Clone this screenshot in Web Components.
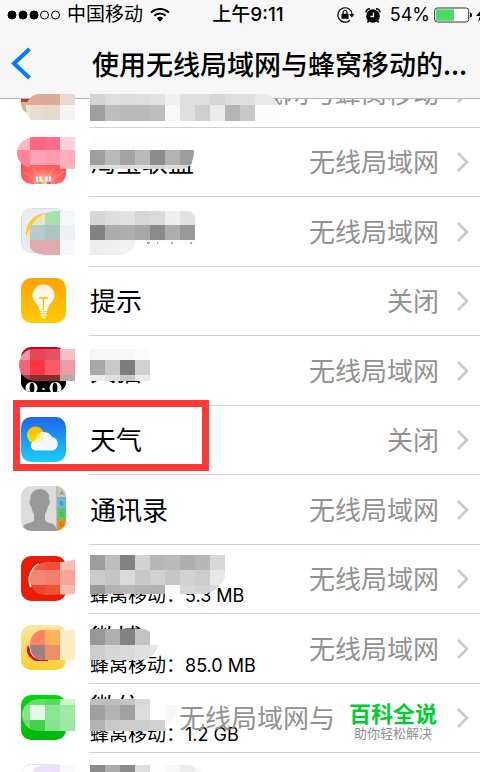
<!DOCTYPE html>
<html lang="zh-CN">
<head>
<meta charset="utf-8">
<meta name="viewport" content="width=device-width, initial-scale=1">
<title>使用无线局域网与蜂窝移动的应用</title>
<style>
html, body { margin: 0; height: 100%; }
body { background: #fff; color: #000; font-family: Inter, "Noto Sans CJK SC", sans-serif; overflow: hidden; }
</style>
</head>
<body>
<settings-page></settings-page>
<script>
const cells = (clip, bands) => {
  const id = 'c' + (cells.n = (cells.n || 0) + 1);
  const rects = bands.map(([y, h, x, list]) => list.split(' ').map((c, i) =>
    c === '-' ? '' : `<rect x="${x + i * 15}" y="${y}" width="15" height="${h}" fill="#${c}"/>`).join('')).join('');
  return `<clipPath id="${id}"><path d="${clip}"/></clipPath><g clip-path="url(#${id})">${rects}</g>`;
};

/* App icons, 45 x 45 */
const ICONS = {
  brown: `<rect width="45" height="45" rx="10" fill="#d2b78c"/><path d="M0 0h45v33H0z" fill="#c23b22"/>`,
  sale: `<defs><radialGradient id="g" cx=".5" cy=".95" r=".8"><stop offset="0" stop-color="#ffc2a8"/><stop offset=".35" stop-color="#ff6a62"/><stop offset="1" stop-color="#ff3740"/></radialGradient></defs>
    <rect width="45" height="45" rx="10" fill="url(#g)"/><path d="M22 45 3 33M22 45 12 29M22 45 33 29M22 45 43 33" stroke="#ff9c90" stroke-opacity=".5" stroke-width="2"/>
    <path d="M16 37.500v5M19.500 37.500v5M25.500 37.500v5M29 37.500v5" stroke="#fff" stroke-width="2"/><path d="M22 41v1.500" stroke="#fff" stroke-width="1.500"/><path d="M17 44h4" stroke="#6ccf76" stroke-width="2"/><path d="M21 44h5" stroke="#ffd83c" stroke-width="2"/><path d="M26 44h4" stroke="#d44fc1" stroke-width="2"/>`,
  swirl: `<rect x=".5" y=".5" width="44" height="44" rx="10" fill="#e8edf6" stroke="#d6dce5"/><circle cx="23" cy="24" r="18" fill="#fff"/><path d="M5 28C4 15 13 5 26 5C14 9 13 18 6 28Z" fill="#fdc72a"/>`,
  tips: `<defs><linearGradient id="g" x2="0" y2="1"><stop stop-color="#ffa303"/><stop offset="1" stop-color="#ffcb03"/></linearGradient><linearGradient id="b" x2="0" y2="1"><stop stop-color="#fff3dc"/><stop offset="1" stop-color="#fff"/></linearGradient></defs>
    <rect width="45" height="45" rx="10" fill="url(#g)"/><path d="M22.500 6.500a11 11 0 0 0-11 11c0 5 4 7 6 11.500l1.500 4h7l1.500-4c2-4.500 6-6.500 6-11.500a11 11 0 0 0-11-11Z" fill="url(#b)"/>
    <path d="M18 20h9M22.500 20v12" stroke="#ffb303" stroke-width="1.300" fill="none"/><path d="M19 34.500h7M19.500 37h6M20.500 39.500h4" stroke="#fff" stroke-width="1.500"/>`,
  cat: `<defs><clipPath id="k"><rect width="45" height="45" rx="10"/></clipPath></defs><g clip-path="url(#k)"><path fill="#c8001c" d="M0 0h45v45H0z"/><path fill="#000" d="M0 28h45v17H0z"/><ellipse cx="10.500" cy="41" rx="6" ry="6" fill="#fff"/><ellipse cx="34.500" cy="41" rx="6" ry="6" fill="#fff"/><ellipse cx="11" cy="41" rx="2.500" ry="5.500"/><ellipse cx="34" cy="41" rx="2.500" ry="5.500"/><ellipse cx="22.500" cy="42" rx="1.500" ry="1" fill="#ddd"/></g>`,
  weather: `<defs><linearGradient id="g" x2="0" y2="1"><stop stop-color="#1f66ee"/><stop offset="1" stop-color="#1acffd"/></linearGradient><linearGradient id="s" x2="0" y2="1"><stop stop-color="#ffba00"/><stop offset="1" stop-color="#ffe000"/></linearGradient></defs>
    <rect width="45" height="45" rx="10" fill="url(#g)"/><circle cx="14.500" cy="18" r="8.500" fill="url(#s)"/>
    <path d="M15 33.500a5 5 0 0 1-.5-10 8.800 8.800 0 0 1 16.500-3.500 7 7 0 0 1 1 13.500Z" fill="#f2f8ff"/><path d="M14.500 23.500A8.800 8.800 0 0 1 22.500 15 8.500 8.500 0 0 1 15 26.500 5 5 0 0 0 10.500 25.500Z" fill="#fff0a8"/>`,
  contacts: `<defs><clipPath id="k"><rect width="45" height="45" rx="10"/></clipPath></defs><g clip-path="url(#k)"><path fill="#dcdcdc" d="M0 0h45v45H0z"/>
    <path d="M0 45c1-5 4-7 8-8 3-1 5-1 5-4v-5c-2-3-2-5-3-8-2-1-2-6-.5-6C8.500 8 13 3 19 3s10.500 5 9 11c1.500 0 1 5-1 6-.5 3-1 5-3 8v5c0 3 2 3 5 4 4 1 6 3 7 8Z" fill="#999"/>
    <path fill="#c7c4bc" d="M36.500 0H45v11.500h-8.500z"/><path fill="#56bdf0" d="M36.500 12H45v10.500h-8.500z"/><path fill="#4cd25b" d="M36.500 23H45v10h-8.500z"/><path fill="#f78b05" d="M36.500 34H45v11h-8.500z"/><path d="M36 0v45M36 11.700h9M36 22.700h9M36 33.500h9" stroke="#8c8276" stroke-width=".7"/>
    <g fill="none" stroke="#555" stroke-opacity=".6" stroke-width=".7"><path d="m39 8.500 1.800-3.500 1.800 3.500M39.500 7.500h2.500M39.500 15.500v3.500h1.500a1 1 0 0 0 0-2 1 1 0 0 0 0-1.500zM39.500 17h1.500M42.500 27a1.800 1.800 0 1 0 0 2M39.500 36.500v3.500c4 0 4-3.500 0-3.500"/></g></g>`,
  red: `<rect width="45" height="45" rx="10" fill="#eb1c02"/><path d="M10 31C7 24 8 14 18 8" stroke="#fff" stroke-width="2" fill="none"/><path d="M23 8c2-3 7-3 9 0Z" fill="#fff"/>`,
  weibo: `<defs><linearGradient id="g" x2="0" y2="1"><stop stop-color="#fbe6a3"/><stop offset="1" stop-color="#ffce2e"/></linearGradient></defs><rect width="45" height="45" rx="10" fill="url(#g)"/><path d="M7 20c-3 6 0 13 8 16h12v-4H13Z" fill="#dc0b17"/><path d="M9 23c-1 5 3 10 10 12h10V20Z" fill="#fff"/>`,
  wechat: `<defs><linearGradient id="g" x2="0" y2="1"><stop stop-color="#00d80b"/><stop offset="1" stop-color="#00b70b"/></linearGradient></defs><rect width="45" height="45" rx="10" fill="url(#g)"/>`,
  pale: `<rect x=".5" y=".5" width="44" height="44" rx="10" fill="#fff" stroke="#e2e2e6"/>`
};

/* Pixelated patches over the private names, on a 15px grid */
const PATCHES = {
  brown: cells('M75 94H38C32 95 29 99 26 104C25 109 28 117 31 120H75Z', [[94,11,15,'dea996 dea996 dea996 ebd8d3'],[105,15,15,'eee6dc e9dccf e5d9c9 f7f3f0']])
    + cells('M90 94H264C271 94 275 99 279 105V121H90Z', [[94,11,90,'d4d4d4 dedede dcdcdc dedede e2e2e2 f0f0f0 dfdfdf dedede d6d6d6 dedede dedede e8e8e8 e8e8e8'],[105,16,90,'9f9f9f bdbdbd b9b9b9 b9b9b9 bdbdbd f8f8f8 dfdfdf cfcfcf ebebeb b4b4b4 c8c8c8 fcfcfc fcfcfc']]),
  sale: cells('M75 137H34C24 137 17 145 17 153S24 168 32 168L75 169Z', [[137,13,15,'feb5c5 ff6480 ff6b88 ffd0dc'],[150,15,15,'ff8298 ffa3b5 ff9cb0 ffadbb'],[165,4,15,'ff8298 ff6262 ff5a5a ffb5b5']])
    + cells('M90 137H186Q194 138 194 150C194 160 190 169 182 169H90Z', [[137,13,90,'fdfdfd fefefe fdfdfd fefefe fefefe fefefe fefefe'],[150,15,90,'9f9f9f b9b9b9 a3a3a3 b9b9b9 8c8c8c b2b2b2 9e9e9e'],[165,4,90,'dddddd dfdfdf dddddd e0e0e0 d5d5d5 dedede dcdcdc']]),
  swirl: cells('M75 211H56C42 212 33 219 26 236V240C28 249 36 255 47 255H75Z', [[211,14,15,'efe6c8 eae3ca a9dfab f3f6fb'],[225,15,15,'efe6c8 b9cbc8 adc5c0 edf1f3'],[240,15,15,'f1e4e8 dfaab0 e0acb2 f5f7fb']])
    + cells('M90 211H188Q195 212 195 217V243H135C134 250 126 255 119 255H90Z', [[211,14,90,'d6d6d6 dddddd e2e2e2 d7d7d7 dadada eeeeee e2e2e2'],[225,15,90,'828282 ababab aeaeae a7a7a7 8a8a8a adadad 989898'],[240,15,90,'ededed efefef f1f1f1 fbfbfb fafafa fbfbfb fafafa']])
    + '<path d="M147 243h3M157 243h1M171 243h2M190 243h2" stroke="#555"/>',
  cat: cells('M75 349H34C25 349 19 356 19 365S26 381 35 381H75Z', [[349,11,15,'e99aa8 e84855 e65263 f4c0c8'],[360,15,15,'e9667c ff3440 ff5a68 f09aa3'],[375,6,15,'a83f48 83302f 83302f b0acad']])
    + cells('M90 349H150V381H90Z', [[349,11,90,'f7f7f7 f7f7f7 f6f6f6 fafafa'],[360,15,90,'a8a8a8 c9c9c9 7d7d7d d0d0d0'],[375,6,90,'ebebeb dedede c9c9c9 eaeaea']]),
  red: cells('M75 559Q71 562 60 562H46C35 564 30 571 30 580C31 590 37 595 46 595L75 594Z', [[555,15,30,'f4563f ee5038 f7bdb3'],[570,15,30,'f4866f f47e6c f7a598'],[585,10,30,'ee4630 ef5036 f8bab2']])
    + cells('M90 555H225V577C221 587 212 594 201 594H90Z', [[555,15,90,'9d9d9d bdbdbd 828282 d2d2d2 b7b7b7 bababa aeaeae b7b7b7 d8d8d8'],[570,15,90,'cbcbcb c5c5c5 dadada c7c7c7 d1d1d1 c6c6c6 d2d2d2 cdcdcd e8e8e8'],[585,9,90,'9a9a9a b4b4b4 b8b8b8 b4b4b4 b3b3b3 f8f8f8 d7d7d7 d3d3d3 d9d9d9']]),
  weibo: cells('M75 630H42C34 631 30 637 30 645C30 654 35 660 43 660H75Z', [[630,15,30,'fc845f ffb15e ffeac6'],[645,15,30,'9c8084 ef8f6a ffedc2']])
    + cells('M90 629H145L150 632V645H158C155 655 149 660 140 660H90Z', [[629,16,90,'989898 afafaf 828282 c2c2c2 e4e4e4'],[645,15,90,'cdcdcd d6d6d6 d9d9d9 e0e0e0 e4e4e4']]),
  wechat: cells('M75 699H41C29 699 22 707 22 714C22 724 29 731 38 731H75Z', [[699,6,15,'68dc6e 68dc6e 57da5c ccf4cf'],[705,15,15,'83e489 e4f7e6 8be58f a0e8a4'],[720,11,15,'6edd74 43d04c 88e390 9fe7a6']])
    + cells('M90 699H150V705H178C177 715 173 722 165 725V731H90Z', [[699,6,90,'c0c0c0 bcbcbc c5c5c5 d8d8d8'],[705,15,90,'9f9f9f b3b3b3 a1a1a1 dcdcdc ffffff f7f7f7'],[720,11,90,'b3b3b3 c9c9c9 cdcdcd cdcdcd d0d0d0 f7f7f7']]),
  pale: cells('M75 765H43Q34 766 32 773H75Z', [[765,8,30,'ece0fb ece0fb f9f8fd']])
    + cells('M90 765H188Q198 767 202 773H90Z', [[765,8,90,'8b8b8b acacac 8c8c8c dedede fefefe f7f7f7 ececec f4f4f4']])
};

class StatusBar extends HTMLElement {
  connectedCallback() {
    this.attachShadow({mode: 'open'}).innerHTML = `
<style>
:host { display: block; overflow: hidden; font-size: 18px; line-height: 30px; }
.bar { display: grid; grid-template-columns: 1fr auto 1fr; align-items: center; margin-right: -16px; height: 30px; }
.side { display: flex; align-items: center; gap: 7px; padding-left: 7px; white-space: nowrap; }
.end { justify-content: flex-end; gap: 4px; padding: 0 10px 0 0; }
.carrier { font-size: 19px; }
.time { font-size: 19px; font-weight: 500; }
svg { display: block; flex: none; }
.lock { margin-right: 6px; } .alarm { margin-right: 5px; }
</style>
<div class="bar">
  <div class="side">
    <svg width="53" height="12" viewBox="0 0 53 12"><g stroke="#000"><circle cx="5" cy="6" r="4"/><circle cx="16" cy="6" r="4"/><circle cx="27" cy="6" r="4"/><circle cx="37.500" cy="6" r="4" fill="none"/><circle cx="48.500" cy="6" r="4" fill="none"/></g></svg>
    <span class="carrier">中国移动</span>
    <svg width="20" height="16" viewBox="0 0 20 16" fill="none" stroke="#000" stroke-width="2"><path d="M1 5.500a13 13 0 0 1 18 0M4.300 8.800a8.200 8.200 0 0 1 11.400 0"/><path d="M6.800 11.300a4.700 4.700 0 0 1 6.400 0L10 14.700Z" fill="#000" stroke="none"/></svg>
  </div>
  <span class="time">上午9:11</span>
  <div class="side end">
    <svg class="lock" width="19" height="18" viewBox="0 0 19 18"><path d="M14 14.200A7.200 7.200 0 1 1 16.200 8.500" fill="none" stroke="#000" stroke-width="1.200"/><path d="M13 8h5.500L15.800 11.500ZM5.500 7.700h7v5h-7z"/><path d="M7 8V6.500a2 2 0 0 1 4 0V8" fill="none" stroke="#000" stroke-width="1.200"/></svg>
    <svg class="alarm" width="16" height="17" viewBox="0 0 16 17"><circle cx="8" cy="9" r="6.800"/><path d="m4 13-1.500 2.500M12 13l1.500 2.500" stroke="#000" stroke-width="1.500"/><path d="M1 5.500a4 4 0 0 1 4-3.800M15 5.500a4 4 0 0 0-4-3.800" fill="none" stroke="#000" stroke-width="1.500"/><path d="M8.500 5.500V9.500H5.500" fill="none" stroke="#fff" stroke-width="1.300"/></svg>
    <span>54%</span>
    <svg width="38" height="16" viewBox="0 0 38 16"><rect x=".7" y="1" width="34" height="14" rx="2.500" fill="#fff" stroke="#333"/><path d="M2 2.300h18v11.400H2z" fill="#4cd964"/><path d="M36 5.500q2 0 2 2.500t-2 2.500Z"/></svg>
    <svg width="10" height="16" viewBox="0 0 10 16"><path d="M7 1 0 9h4l-2 6 8-9H5Z"/></svg>
  </div>
</div>`;
  }
}

class NavBar extends HTMLElement {
  connectedCallback() {
    this.attachShadow({mode: 'open'}).innerHTML = `
<style>
:host { display: flex; align-items: center; height: 68px; }
button { flex: none; width: 92px; height: 60px; padding: 0 0 0 10px; border: 0; background: none; text-align: left; }
svg { display: block; }
h1 { flex: 1; min-width: 0; margin: 0; font: 500 27px/40px "Noto Sans CJK SC", sans-serif; white-space: nowrap; overflow: hidden; }
</style>
<button aria-label="返回"><svg width="22" height="34" viewBox="0 0 22 34"><path d="M19.500 2 4 16.500 19.500 31" fill="none" stroke="#007aff" stroke-width="4"/></svg></button>
<h1><slot></slot></h1>`;
  }
}

class AppRow extends HTMLElement {
  connectedCallback() {
    const icon = this.getAttribute('icon'), usage = this.getAttribute('usage');
    const top = this.getAttribute('origin');
    this.attachShadow({mode: 'open'}).innerHTML = `
<style>
:host { display: block; position: relative; height: 70px; font-family: "Noto Sans CJK SC", sans-serif; }
:host(:nth-child(even)) { height: 69px; }
a { display: flex; height: 100%; align-items: center; padding-left: 21px; box-sizing: border-box; color: inherit; text-decoration: none; }
.icon { display: block; flex: none; width: 45px; height: 45px; margin: 0 23px 3px 0; }
.body { position: relative; flex: 1; align-self: stretch; min-width: 0; display: flex; align-items: center; border-bottom: 1px solid #d2d2d4; }
.label { flex: 1; min-width: 0; padding: 0 0 2px 1px; font-size: 26px; line-height: 28px; white-space: nowrap; }
.label.two { padding: 4px 0 0 1px; }
small { display: block; font-size: 19px; line-height: 26px; }
small span { font: 18px/26px Inter, sans-serif; }
.value { position: absolute; right: 41px; padding-bottom: 2px; color: #929292; font-size: 26px; line-height: 40px; white-space: nowrap; }
.go { display: block; margin-right: 10px; }
.name { display: block; min-height: 28px; }
.patch { position: absolute; z-index: 3; left: 0; top: 0; width: 300px; height: 70px; overflow: visible; pointer-events: none; }
</style>
<a href="#${icon}">
  <svg class="icon" viewBox="0 0 45 45">${ICONS[icon]}</svg>
  <span class="body">
    <span class="label${usage ? ' two' : ''}"><span class="name"><slot></slot></span>${usage ? `<small>蜂窝移动：<span>${usage}</span></small>` : ''}</span>
    <span class="value">${this.getAttribute('value')}</span>
    <svg class="go" width="14" height="22" viewBox="0 0 14 22"><path d="m2 2 9 9-9 9" fill="none" stroke="#c7c7cc" stroke-width="2.500"/></svg>
  </span>
</a>
${PATCHES[icon] ? `<svg class="patch" viewBox="0 ${top} 300 70">${PATCHES[icon]}</svg>` : ''}
<slot name="over"></slot>`;
  }
}

class FocusFrame extends HTMLElement {
  connectedCallback() {
    this.attachShadow({mode: 'open'}).innerHTML = `<style>:host { position: absolute; z-index: 4; left: 13px; top: -6px; width: 196px; height: 71px; box-sizing: border-box; border: 7px solid #fc3a38; pointer-events: none; }</style>`;
  }
}

class BrandMark extends HTMLElement {
  connectedCallback() {
    this.attachShadow({mode: 'open'}).innerHTML = `
<style>
:host { position: absolute; z-index: 4; right: 29px; top: 14px; width: 116px; height: 50px; background: #fff; text-align: center; white-space: nowrap; }
strong, span { display: block; }
strong { color: #0c3; font-size: 22px; line-height: 28px; font-weight: 700; }
span { color: #8f8f8f; font-size: 13px; line-height: 14px; }
</style><strong>百科全说</strong><span>助你轻松解决</span>`;
  }
}

class SettingsPage extends HTMLElement {
  connectedCallback() {
    this.attachShadow({mode: 'open'}).innerHTML = `
<style>
:host { display: block; height: 100vh; overflow: hidden; }
header { position: relative; z-index: 2; background: #f7f7f7; border-bottom: 1px solid #b8b8ba; }
main { margin-top: -41px; }
</style>
<header><status-bar></status-bar><nav-bar>使用无线局域网与蜂窝移动的...</nav-bar></header>
<main>
  <app-row icon="brown" origin="58" value="无线局域网与蜂窝移动"></app-row>
  <app-row icon="sale" origin="128" value="无线局域网">淘宝联盟</app-row>
  <app-row icon="swirl" origin="197" value="无线局域网"></app-row>
  <app-row icon="tips" origin="267" value="关闭">提示</app-row>
  <app-row icon="cat" origin="336" value="无线局域网">天猫</app-row>
  <app-row icon="weather" origin="406" value="关闭">天气<focus-frame slot="over"></focus-frame></app-row>
  <app-row icon="contacts" origin="475" value="无线局域网">通讯录</app-row>
  <app-row icon="red" origin="545" value="无线局域网" usage="5.3 MB"></app-row>
  <app-row icon="weibo" origin="614" value="无线局域网" usage="85.0 MB">微博</app-row>
  <app-row icon="wechat" origin="684" value="无线局域网与蜂窝移动" usage="1.2 GB">微信<brand-mark slot="over"></brand-mark></app-row>
  <app-row icon="pale" origin="753" value=""></app-row>
</main>`;
  }
}

customElements.define('status-bar', StatusBar);
customElements.define('nav-bar', NavBar);
customElements.define('focus-frame', FocusFrame);
customElements.define('brand-mark', BrandMark);
customElements.define('app-row', AppRow);
customElements.define('settings-page', SettingsPage);
</script>
</body>
</html>
